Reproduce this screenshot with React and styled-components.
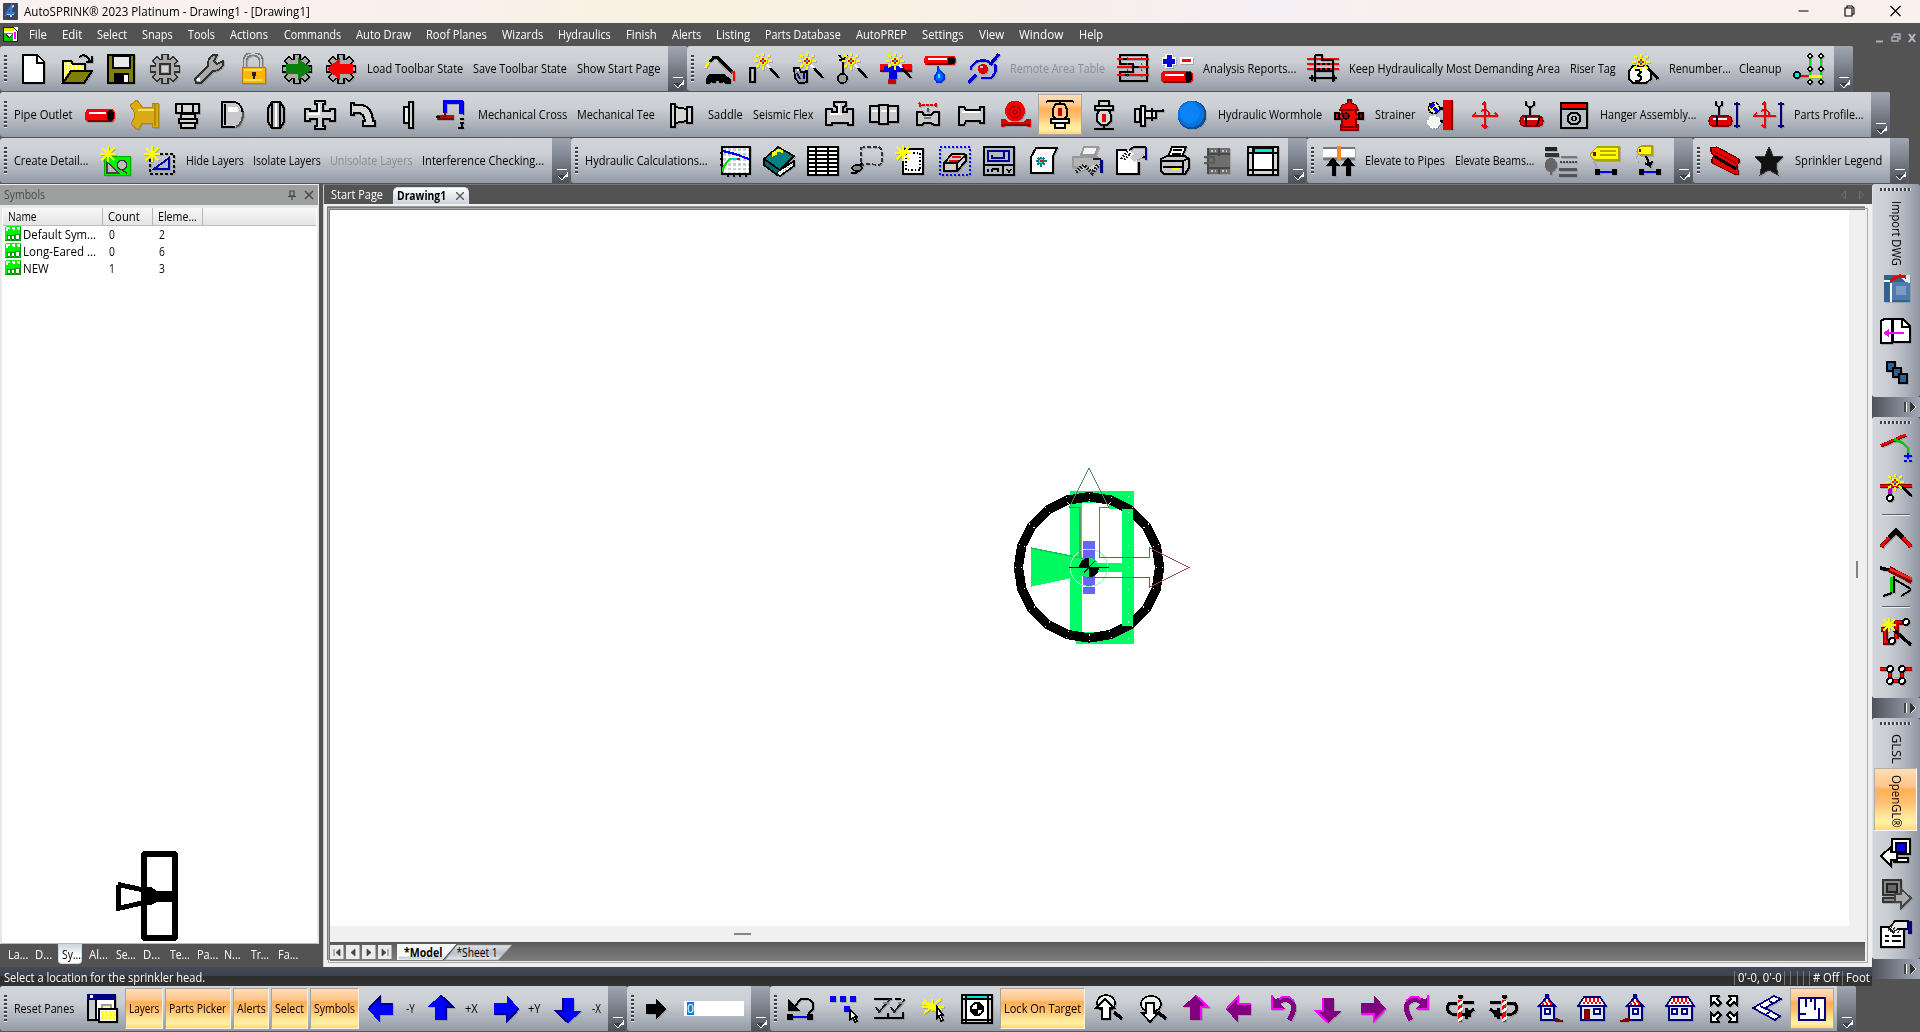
import React, { useLayoutEffect, useRef, useState } from "react";
import styled, { createGlobalStyle, css } from "styled-components";

const Global = createGlobalStyle`
  * { box-sizing: border-box; }
  html, body { margin: 0; padding: 0; overflow: hidden; background: #535353; }
  body { font-family: "Open Sans", "Noto Sans", sans-serif; font-size: 12px; color: #000; }
`;

/* ---------- text that keeps a fixed advance width ---------- */
const FitBox = styled.span`
  display: block;
  flex: none;
  width: ${(p) => p.$w}px;
  height: 16px;
  line-height: 16px;
  white-space: nowrap;
`;
const FitInner = styled.span`
  display: inline-block;
  transform-origin: 0 50%;
`;
function Fit({ w, children }) {
  const ref = useRef(null);
  const [k, setK] = useState(1);
  useLayoutEffect(() => {
    const n = ref.current.offsetWidth;
    if (n) setK(w / n);
  }, [w, children]);
  return (
    <FitBox $w={w}>
      <FitInner ref={ref} style={{ transform: `scaleX(${k})` }}>{children}</FitInner>
    </FitBox>
  );
}

/* ---------- path helpers: a shape is [d, fill, stroke, width, dash] ---------- */
const N = "none", K = "#000", W = "#fff", RD = "#f00", BL = "#0000ff", NV = "#000080", YL = "#ff0", GR = "#9b9b9b", LG = "#d6d6d6", MA = "#ff00ff", PU = "#800080", DR = "#800000";
const R = (x, y, w, h) => `M${x} ${y}h${w}v${h}h${-w}z`;
const C = (x, y, r, s = r) => `M${x - r} ${y}a${r} ${s} 0 1 0 ${2 * r} 0a${r} ${s} 0 1 0 ${-2 * r} 0z`;
const burst = (x, y) => [
  [`M${x - 9} ${y}h4M${x + 5} ${y}h4M${x} ${y - 8}v3M${x} ${y + 5}v4M${x - 7} ${y - 6}l3 2M${x + 4} ${y + 4}l3 3M${x - 7} ${y + 6}l3-2M${x + 4} ${y - 4}l3-2`, N, YL, 2],
  [C(x, y, 3.8), YL, N, 0],
  [`M${x - 3} ${y}h2M${x + 1} ${y}h2M${x} ${y - 3}v2M${x} ${y + 1}v2`, N, RD, 2], [R(x - 1, y - 1, 2, 2), "#00dcdc", N, 0],
];
const star = (x, y, r = 8) => [[`M${x - r} ${y}h${2 * r}M${x} ${y - r}v${2 * r}M${x - r * 0.8} ${y - r * 0.8}l${r * 1.6} ${r * 1.6}M${x - r * 0.8} ${y + r * 0.8}l${r * 1.6} ${-r * 1.6}`, N, YL, 1.8]];
const wand = (x, y) => [...burst(x, y), [`M${x + 4} ${y + 4}l4 4`, N, W, 2], [`M${x + 7} ${y + 7}l9 10`, N, K, 2.6]];
const gearPath = () => {
  let d = "";
  for (let i = 0; i < 8; i++) {
    [[-0.3, 10.5], [-0.2, 14.8], [0.2, 14.8], [0.3, 10.5]].forEach(([o, r], j) => {
      const a = (i * Math.PI) / 4 + o;
      d += `${i + j ? "L" : "M"}${(16 + r * Math.cos(a)).toFixed(1)} ${(16 + r * Math.sin(a)).toFixed(1)}`;
    });
  }
  return d + "z";
};
const gear = (f, s) => [[gearPath(), f, s, 1.5]];
const pipe = (x, y, w, h = 9) => [
  [`M${x + 3} ${y}h${w - 6}q3 0 3 ${h / 2}t-3 ${h / 2}h${-(w - 6)}q-3 0-3 ${-h / 2}t3 ${-h / 2}z`, RD, N, 0],
  [`M${x + 3} ${y + h - 1}h${w - 7}`, N, DR, 2],
  [`M${x + 4} ${y + h * 0.32}h${w - 13}`, N, W, 1.5], [C(x + w - 4.5, y + h / 2, 3.8, h / 2 - 0.5), K, N, 0],
];
const house = (wide, side) => {
  const a = wide ? 4 : 8, w = wide ? 24 : 14;
  return [
    [wide ? `M3 12L8 4h16l5 8z` : `M8 12L14 6h2l6 6z`, W, N, 0],
    [wide ? "M9 6h15M7 10h20" : "M12 8h7M10 11h10", N, RD, 2, "2 2"], [wide ? "M9 8h16" : "M13 9.500h7", N, RD, 1.6, "2 2"],
    [wide ? `M2 13L8 4h16l6 9z` : `M7 13L14 5V2h2v3l7 8z`, N, NV, 1.8],
    [R(a + 1, 13, w - 1, 14), "#dfe6f0", NV, 2],
    ...(wide && side ? [[R(8, 16, 6, 11), DR, N, 0], [R(18, 16, 6, 5), W, NV, 2]] : wide ? [[R(8, 16, 5, 5), W, NV, 2], [R(18, 16, 5, 5), W, NV, 2]] : [[R(13, 16, 5, 5), W, NV, 2]]),
    ...(!wide ? [[side ? "M23 25l8 3h-8z" : "M8 25l-8 3h8z", DR, DR, 1]] : []),
  ];
};
const bigArrow = (rot, f, hi) => [["M2 16L14 4v7h13v11H14v8z", f, N, 0, null, rot], ["M2.500 16L14 4v7h13", N, hi, 2, null, rot]];
const turnArrow = (flip) => [
  ["M11 9Q17 4 23 9T21 27", N, PU, 5, null, 0, flip], ["M3 2v14h14l-5-5 3-3-4-3-4 1z", PU, N, 0, null, 0, flip],
  ["M4 2v14h11M11 7l3-3h7l5 4", N, MA, 2, null, 0, flip],
];

const ICON = {
  file: [["M6 2h14l7 7v21H6z", W, K, 2.2], ["M20 2v8h7", W, K, 2.2]],
  open: [["M2 30V8h8l2 3h12v6", "#ffffb0", K, 2.2], ["M4 10h6M4 13h18M4 16h16M4 19h7M4 22h4", N, YL, 2, "2 2"], ["M2 30L10 18h21l-8 12z", "#808000", K, 2.2], ["M18 4q6-5 11 4M31 3v6h-6", N, K, 2]],
  save: [[R(3, 2, 26, 28), "#808000", K, 2.4], [R(8, 3, 17, 12), "#e8e8e8", K, 1.4], [R(9, 20, 15, 10), K, N, 0], [R(19, 22, 4, 7), W, N, 0]],
  gear: [...gear("#aaa", "#303030"), [R(11, 11, 10, 10), "#aaa", "#303030", 1.5], [R(13, 13, 6, 6), "#cfd2d7", N, 0]],
  wrench: [["M2 26l13-13q-1-7 5-11h4l-3 6 3 3 6-3v4q-3 6-10 6L8 30H3z", "#aaa", "#303030", 1.8], [R(4, 25, 3, 3), W, N, 0]],
  lock: [["M8 14V8q0-7 8-7t8 7v6", N, "#777", 4.5], ["M8 14V8q0-7 8-7t8 7v6", N, "#ccc", 1.6], [R(5, 14, 23, 16), "#ffb600", "#b87900", 1], ["M7 17h18M7 27h18", N, "#ffdc60", 2], ["M15 19h4v4h-1v3h-2v-3h-1z", "#222", N, 0]],
  loadGear: [...gear("#aaa", K), ["M5 11h12V5l14 11-14 11v-6H5z", "#0a820a", N, 0]],
  saveGear: [...gear("#aaa", K), ["M28 11H15V5L2 16l13 11v-6h13z", RD, N, 0]],

  lasso: [["M2 30V26L6 21H19L26 26V30H21L18 27H9L6 30Z", K, K, 1], ["M8 29h4M15 29h4", N, K, 2], ["M6 9L10 4H13L29 20", N, K, 3], ["M14 9L22 16", N, GR, 1.6], ["M1 15L5 9", N, YL, 2.4], ["M27 19h3v9", N, RD, 2.6]],
  wand1: [...wand(15, 8), [R(2, 15, 5, 14), GR, K, 2], ["M4.500 16v12", N, LG, 1.5]],
  wand2: [["M2 15h5l2 4h4l2-3v13l-4 1H7l-4-5z", GR, K, 1.8], ["M5 20l3 6M12 20v6", N, NV, 1.5], ["M5 17h2", N, W, 2], ...wand(15, 8)],
  wand3: [["M3 2l4 5 4-5M7 8v12", N, K, 2], ["M3 7h4", N, K, 1.5], [C(6.5, 25.5, 4.5), GR, K, 1.8], ...wand(15, 8)],
  wand4: [[R(0, 11, 8, 8), RD, N, 0], [R(22, 11, 10, 8), RD, N, 0], ["M0 18h6M24 18h8", N, DR, 2], ["M4 13h20v6h-7v7H9v-7H4z", "#0000e8", N, 0], [R(8, 26, 8, 5), "#d00000", N, 0], ...wand(15, 8)],
  drip: [...pipe(0, 3, 32, 9), ["M14 13v5l-3 5v3l2 3h4l3-3v-4l-3-4", "#0060ff", "#0030e0", 1.6], ["M15 21v4", N, "#0ff", 2]],
  swirl: [["M0 30L8 22M22 12L31 1", N, "#0000c8", 3.4], ["M3 17V14L8 9Q14 6 22 9M27 11q3 8-4 14H13", N, "#0000d8", 2.6], [C(15, 16, 5.2), "#d80000", N, 0], [C(13.5, 14, 1.4), "#fbb", N, 0]],
  area: [["M3 2h27v26H3v-9h13v-8H3z", N, K, 2.2], ["M0 6h6M10 6h22M0 14h15M22 14h10M0 22h8M12 22h20", N, RD, 1.8], ["M6 6h4M15 14h7M8 22h4", N, K, 1.6], ["M10 4v24M24 4v24", N, "#555", 1, "2 4"]],
  plusMinus: [[R(20, 5, 11, 5), RD, W, 1.6], ["M8 1v14M1 8h14", N, W, 8], ["M8 2v12M2 8h12", N, "#0000e0", 5], ...pipe(0, 18, 32, 12)],
  chair: [["M0 6h32M0 11h32M0 16h32", N, RD, 1.8], ["M8 2h7v5h11v22M8 2v27M8 18h18M2 25h28M5 22v6M27 22v6", N, K, 2], ["M10 11h14M10 16h14", N, K, 1.2, "3 2"]],
  three: [["M2 18l4-5h14l4 5v8l-5 4H6l-4-4z", W, K, 2], ["M20 14l11 12", N, K, 3], ["M8 17h4l2 2-3 3 3 2v2l-2 2H8", N, K, 2], ...burst(14, 9)],
  cleanup: [["M17 4v24M28 4v24", N, "#00e000", 2.4], ["M4 23h12", N, RD, 2.4], ["M16 23h13", N, YL, 3], [C(4, 22, 3), "#00e5e5", K, 1.6], ...[[17, 3], [28, 3], [17, 16], [28, 16], [17, 29], [28, 29]].map(([x, y]) => [C(x, y, 2), W, K, 1.4])],

  pipe: pipe(1, 10, 30, 13),
  wye: [["M2 6l7-5 5 7h10V4h6v24h-6v-4H14l-4 7-7-6 3-6v-6z", "#d9aa14", "#b38800", 1], ["M10 11h18", N, "#f6e060", 2], ["M27 5v22", N, "#b88a00", 2.5]],
  nut: [[R(4, 5, 23, 9), LG, K, 2], ["M10 5v9M21 5v9", N, K, 2], [R(9, 15, 14, 5), LG, K, 2], [R(7, 20, 18, 4), LG, K, 2], [R(9, 24, 14, 5), LG, K, 2]],
  capD: [["M6 3h13q8 0 8 12t-7 13H6z", "#c9c9cb", N, 0], ["M19 28H6V3h13q7 2 8 12", N, K, 2], ["M27 13q0 12-7 15", N, "#555", 2], ["M9 5v21", N, K, 1.6], ["M12 8h10v5H12z", W, N, 0]],
  disc: [["M12 3h8l4 6v14l-4 6h-8l-4-6V9z", "#b4b4b6", K, 2], ["M12 3v26M20 3v26", N, K, 1.6], ["M16 4v24", N, W, 2.4]],
  cross: [["M11 2h10v3h-2v7h7v-2h5v12h-5v-2h-7v7h2v3H11v-3h2v-7H6v2H1V10h5v2h7V5h-2z", "#d0d0d4", K, 2], ["M15 5v10H4", N, W, 2]],
  elbow: [["M3 4h3v2h8q10 2 11 16h2v5H15v-5h2q-1-8-7-8H6v2H3z", LG, K, 2]],
  plate: [[R(17, 3, 4, 26), LG, K, 2], [R(12, 8, 5, 16), "#eee", K, 2]],
  ubend: [["M9 14V3h16v12", N, BL, 3.6], ["M7 14V2h20v14", N, NV, 1], ["M1 18h17", N, "#d00000", 5], ["M0 18h4", N, K, 2], ["M2 20h16M9 13v5", N, DR, 2], ["M24 20h4M24 24h4M26 24v5M22 29h6", N, K, 2]],
  reducer: [[R(5, 5, 4, 23), LG, K, 2], ["M9 8l12 2v12l-12 2z", LG, K, 2], [R(21, 8, 5, 16), LG, K, 2]],
  tee: [["M2 10h6v3h5V8l-3-1V3h12v4l-3 1v5h4v-3h6v16h-5v-2H8v2H2z", "#cacacc", K, 2], ["M6 15h12M15 5v10", N, W, 2]],
  coupling: [[R(2, 7, 9, 16), "#cacacc", K, 2], [R(20, 7, 10, 16), "#cacacc", K, 2], [R(11, 6, 9, 19), "#cacacc", K, 2], ["M4 12h6M13 12h6M22 12h6", N, W, 2]],
  valve: [["M7 4l2 2M7 8l2-2h14l2-2M23 6l2 2", N, "#e00000", 1.8, "3 1"], ["M15.500 9v4", N, "#555", 2], ["M5 13h5l2 3h7l3-3h5v13h-5l-3-2h-7l-2 2H5z", "#cacacc", K, 2], ["M12 19h7", N, "#777", 1.6]],
  spool: [["M3 8h5l2 3h14V8h4v16h-4v-2H10l-2 4H3z", "#cacacc", K, 2], ["M6 13h18", N, W, 2]],
  pump: [[C(15, 12, 10, 10.5), "#f20000", N, 0], [C(15, 13, 5.5), N, "#a80000", 1.4], [C(15, 13, 2), N, "#a80000", 1.2], ["M1 28V20h4l3 3h15l3-3h5v8h-3l-3-2H7l-3 2z", "#d40000", N, 0], ["M2 26h28", N, "#900000", 1.6]],
  head: [["M2 3l2-1h24l2 1M16 2v4", N, K, 2], ["M12 5q-3 3-3 7v5l3 3h8l3-3v-5q0-4-3-7z", "#ffc98c", K, 2], [R(14, 9, 4, 8), "#c00", N, 0], [R(7, 20, 18, 4), "#f4f4f4", K, 2], [R(11, 24, 10, 5), "#f4f4f4", K, 2]],
  headUp: [[R(11, 2, 10, 5), LG, K, 2], [R(7, 7, 18, 4), LG, K, 2], ["M12 11q-3 2-3 7v4l4 4h6l4-4v-4q0-5-3-7z", "#d8d8d8", K, 2], [R(14, 15, 4, 8), "#e00", N, 0], ["M16 26v3M6 30h20", N, K, 2]],
  sidewall: [[R(3, 10, 5, 13), LG, K, 2], [R(9, 7, 4, 20), "#eee", K, 2], ["M13 12h11v7H13z", "#e4e4e4", K, 2], ["M20 9v13", N, K, 1.4], ["M24 12h8M30 11h2", N, K, 2]],
  sphere: [[C(16, 16, 14.5), "#0a4f9c", N, 0], [C(15, 15, 13.2), "#0873dc", N, 0], [C(14, 14, 10), "#0a84f4", N, 0]],
  hydrant: [["M15 1h3v3l5 2 2 5H7l2-5 6-2z", RD, "#700", 1.2], ["M9 11h14v4h4v5h-4v6h2v5H8v-5h1v-6H5v-5h4z", RD, "#700", 1.2], [C(13, 17, 3), "#900", K, 1.2], [R(2, 14, 4, 6), RD, K, 1.4], [R(26, 14, 4, 6), "#800", K, 1.4], ["M6 11h20M7 28h19", N, "#700", 1.5]],
  strainerA: [[R(17, 1, 8, 30), "#e00000", N, 0], [R(25, 1, 2, 30), DR, N, 0], [C(8, 9, 5.5), "#fff27a", K, 1.8, "3 1"], ["M4 9l4-4M8 9l4 4", N, BL, 3], ["M13 9h4M13 22h4", N, K, 3], [C(8, 23, 6), "#f4f4f4", W, 1.5, "3 2"]],
  axes: [["M2 17h26M15 3v26M12 6l3-3M12 26l3 3 2-2M6 14l-4 3M25 14l3 3", N, "#f40000", 1.6], ["M11 12l4-2 4 3v5", N, "#f40000", 1.4]],
  hanger: [["M12 2v4l3 2h2l3-2V2M16 8v9", N, K, 1.8], ["M9 17h16q4 0 4 5t-4 5H9q-3 0-3-5t3-5z", "#e00000", DR, 1.2], ["M10 20h14", N, W, 1.8], ["M12 17v10", N, K, 1.8], ["M26 18l-3 8", N, K, 1.8]],
  vault: [[R(3, 4, 26, 25), "#b9bdc4", K, 2.2], [R(3, 4, 26, 6), RD, K, 1.5], ["M3 10h26", N, K, 2], ["M13 14h6l3 3v5l-3 3h-6l-3-3v-5z", N, K, 1.8], [C(16, 19.5, 2), N, K, 1.6]],
  hangerDim: [["M8 2v4l3 2 3-2V2M11 8v9", N, K, 1.8], ["M4 17h16q4 0 4 5t-4 5H4q-3 0-3-5t3-5z", "#e00000", DR, 1.2], ["M5 20h14", N, W, 1.8], ["M9 17v10", N, K, 1.8], ["M29 3v26M26 5h6M26 27h6", N, NV, 2]],
  axesDim: [["M1 17h23M13 3v26M10 6l3-3M10 26l3 3M5 14l-4 3", N, "#f40000", 1.6], ["M9 12l4-2 4 3v5", N, "#f40000", 1.4], ["M29 3v26M26 5h6M26 27h6", N, NV, 2]],

  detail: [[R(4, 11, 26, 19), "#00f000", "#00b000", 1], ["M7 28V17l12 11z", "#b9bec5", "#444", 1.3], [C(22, 20, 4.5), "#b9bec5", "#333", 1.5], ["M22 25l5 3", N, "#333", 1.5], ...star(8, 9)],
  crop: [[R(6, 9, 24, 20), N, K, 2, "3 2"], ["M10 24L25 13v11z", "#b7bbc6", "#0000a8", 2], ...star(8, 9)],
  graph: [[R(3, 2, 28, 27), "#c8cbd2", K, 2], ["M8 3v25M13 3v25M18 3v25M23 3v25M28 3v25M4 7h26M4 12h26M4 17h26M4 22h26M4 26h26", N, W, 1.4], ["M1 8h2M1 14h2M1 20h2M9 30v2M15 30v2M21 30v2M27 30v2", N, K, 1.6], ["M4 6l12 3 14 5", N, BL, 2.2], ["M4 27v-4l4-6 3-3h3", N, "#00e000", 2], ["M12 14h6", N, "#00d8d8", 2.4], ["M18 14h3", N, RD, 2.4]],
  book: [["M1 14L15 2l16 9-14 14z", "#008080", K, 1.8], ["M1 14v6l13 10 3-5z", "#006868", K, 1.8], ["M17 25l14-9v5L17 31l-3-2", W, K, 1.8], ["M17 28l13-9", N, GR, 1, "1.5 1.5"], ["M9 9l7-4 4 2M9 11l5-3", N, YL, 2.4]],
  table: [[R(1, 2, 30, 28), "#fff", K, 2], ["M1 6h30M1 10h30M1 14h30M1 18h30M1 22h30M1 26h30M9 2v28M21 2v28", N, K, 1.8]],
  region: [["M10 3l3-1h15l3 3v13l-3 2-10-1-8 1z", N, "#333", 1.8, "4 2"], ["M0 28h5l4-3M8 21l3-3", N, K, 2], [C(6, 23, 5, 3), "#888", K, 1.6]],
  newPage: [[R(8, 4, 20, 25), "#fff", K, 2.2], [R(11, 8, 14, 17), N, K, 1.5, "1.5 2"], ...star(8, 8)],
  cubeSel: [[R(1, 2, 30, 28), N, BL, 2, "2 2"], ["M5 18l8-9h11l3 1v6l-9 10H5z", "#ccc", K, 2], ["M5 18h13l9-8M18 18v8", N, K, 1.8], ["M13 12h9M10 16h9", N, RD, 2.2]],
  panel: [[R(1, 2, 30, 28), "#b7bbc2", K, 2.2], ["M5 6h21v10H5zM9 10v3h12V6", N, "#000090", 2], ["M1 20h30M20 20v10", N, K, 2], ["M5 24v3M9 24v3M9 24h6v3M24 24l2 3 2-3", N, K, 1.8]],
  scroll: [["M4 28V12l5-9h21l-4 8v17z", "#fff", K, 2], ["M9 16h11M14 12v10M11 13l7 7M17 13l-7 7", N, "#008080", 1.8], [C(14, 16, 2), "#0ff", N, 0], ["M13 16h3", N, RD, 1.5]],
  printPic: [["M10 10l3-8h14l-3 8z", "#f2f2f2", "#999", 2], ["M2 12h24l4 3v7H2z", "#b4b4b4", "#999", 1.5], ["M5 28l8-8 3 3 8 4 4-9", "#ccc", N, 0], ["M5 27l8-7 8 8 7-9", N, "#222", 4, "1.5 1.5"], ["M22 14h8", N, "#222", 2], ["M30 15v13", N, NV, 3]],
  pageBrush: [["M2 5h12l8 6v17H2z", "#fff", N, 0], ["M12 5H2v24h22V17", N, K, 2], ["M14 5l5-3h12M26 12h5", N, K, 2], ["M6 14l6-7 7 6M9 15l6-6", N, "#222", 2.6, "1.5 1.5"], ["M15 12l5-4h8v4l-6 2-3 3z", "#c8c8c8", N, 0], ["M31 2v13", N, NV, 3]],
  printer: [["M9 12l4-10h14l-4 10z", "#fff", K, 2], ["M14 5h9M13 9h9", N, K, 1.4], ["M2 14l6-3h18l4 3v9l-4 6H5l-3-3z", "#c6c6c6", K, 2], ["M2 16h22l6-3M4 22h20M24 17v11", N, K, 1.6], ["M13 24h8", N, YL, 2.4]],
  server: [[R(5, 3, 22, 26), "#6e6e6e", N, 0], ["M5 3v26M16 3v8M16 22v7", N, "#484848", 1.8], ["M8 6h5M8 26h5M19 6h5M19 26h5", N, "#c8c8c8", 1.6, "2 2"], ["M5 9h22M5 23h22", N, "#484848", 1.4], ["M1 12h10v6H1", N, "#5a5a5a", 2.5]],
  windowI: [[R(1, 2, 30, 28), "#d4d6da", K, 2.2], [R(6, 8, 20, 17), W, N, 0], [R(7, 3, 18, 5), "#00e5e5", K, 1], ["M1 8h30M6 2v28M26 2v28M1 25h30", N, K, 1.8]],
  windowT: [[R(1, 2, 30, 28), "#d4d6da", K, 2.2], [R(5, 7, 22, 20), W, N, 0], [R(6, 3, 20, 2.5), "#00e5e5", N, 0], ["M1 6h30M5 2v28M27 2v28M1 27h30", N, K, 1.5], [C(16, 16, 6), W, K, 2], ["M16 10v6h6a6 6 0 0 0-6-6M16 22v-6h-6a6 6 0 0 0 6 6", K, K, 1]],
  elevPipes: [["M0 3h32M0 14h32", N, "#777", 2.4], [R(0, 4, 32, 8), W, N, 0], ["M16 1v14", N, "#ff8a20", 4], ["M9 31V21H3l7-9 7 9h-4v10zM23 31V21h-5l7-9 7 9h-4v10z", K, N, 0]],
  levels: [[R(0, 2, 12, 4), "#222", N, 0], [R(0, 8, 14, 4), "#333", N, 0], ["M16 12h16", N, "#777", 2], ["M15 17h17", N, "#444", 1.5, "2 1"], [C(6, 20, 6, 7), "#666", N, 0], ["M14 24h18M14 30h18", N, "#555", 3], ["M6 26v4", N, "#666", 2]],
  tagWide: [["M4 6l4-4h22v13H6l-5-5z", YL, "#b0a000", 1.2], ["M11 6h16M11 10h16", N, "#b8a800", 1.5], [R(4, 7, 3, 4), DR, N, 0], ["M3 12l5 12", N, "#aaa", 1.6], ["M10 27h14", N, BL, 2], [R(6, 24, 5, 6), K, N, 0], [R(23, 24, 5, 6), K, N, 0]],
  tagDown: [["M5 3l3-2h11v9H7l-3-3z", YL, "#b0a000", 1.2], [R(6, 4, 2, 3), DR, N, 0], ["M4 8q-4 6 1 8", N, "#ccc", 1.8], ["M13 11l4 10M12 18l5 3 2-5", N, K, 2.2], ["M10 27h14", N, BL, 2], [R(6, 24, 5, 6), K, N, 0], [R(23, 24, 5, 6), K, N, 0]],
  beam: [["M2 3l6-1 22 12v4l-2 2v4l2 2-1 4-4-1L3 18v-4l2-3-3-4z", "#e80000", "#600", 1.2], ["M5 11l22 13", N, K, 3], ["M5 6l22 12", N, "#a00000", 1.5]],
  starI: [["M16 2l4 9 10 1-7 7 2 11-9-5-9 5 2-11-7-7 10-1z", "#111", "#333", 1]],

  panes: [[R(2, 2, 27, 25), W, K, 2], [R(1, 1, 29, 6), NV, N, 0], [R(4, 2, 3, 3), W, N, 0], [R(3, 7, 6, 19), "#c6c9cf", N, 0], ["M10 7v20", N, K, 2], [R(16, 12, 9, 5), "#ffff90", GR, 1.5], [R(13, 16, 18, 13), "#fff", K, 1.8], [R(15, 18, 14, 9), "#ffff70", N, 0], ["M15 19h14M16 22h14M15 25h14", N, YL, 2, "2 2"]],
  left: bigArrow(0, BL, NV), up: bigArrow(90, BL, NV), right: bigArrow(180, BL, NV), down: bigArrow(270, BL, NV),
  pLeft: bigArrow(0, PU, MA), pUp: bigArrow(90, PU, MA), pRight: bigArrow(180, PU, MA), pDown: bigArrow(270, PU, MA),
  black: [["M6 11h10V6l11 10-11 10v-5H6z", K, N, 0]],
  undoDim: [["M9 14L16 6h7q7 3 5 10l-5 5", N, K, 2], ["M3 6v12h12z", K, N, 0], ["M8 24h14", N, BL, 2], [R(2, 21, 6, 6), K, N, 0], [R(22, 21, 6, 6), K, N, 0]],
  dots: [[R(1, 3, 6, 6), BL, N, 0], [R(11, 3, 6, 6), BL, N, 0], [R(21, 3, 6, 6), BL, N, 0], [R(15, 13, 6, 6), BL, N, 0], ["M21 17v10l3-2 2 4 2-1-2-4h2z", W, K, 1.4]],
  checks: [["M1 6h18M22 6h6M1 25h30", N, K, 2], ["M15 20v4M30 19v6", N, K, 2], ["M3 14l3 5L17 6M18 14l3 5L32 6", N, "#222", 1.8], ["M10 10h6M25 10h5", N, "#888", 1.6]],
  sparkSel: [["M5 14h22M15 6v12M7 7l15 13M7 20L24 6M5 10l20 7", N, YL, 2.2], ["M20 14v11l2-2 2 5 2-1-2-5h2z", W, K, 1.5]],
  zoomUp: [[C(14, 10, 9, 8), "#eee", K, 1.8], ["M22 19l8 7", N, K, 3.5], ["M13 6l9 9h-4v11h-8V15H4z", W, K, 1.8]],
  zoomDn: [[C(15, 11, 10, 8), "#eee", K, 1.8], ["M22 19l8 7", N, K, 3.5], ["M14 29l8-9h-4V10h-8v10H6z", W, K, 1.8]],
  turnL: turnArrow(false), turnR: turnArrow(true),
  rotA: [["M16 2v4M14 3h5", N, K, 3], ["M16 7v22", N, RD, 4.5], ["M14 12l5-4M14 19l5-4M14 28l5-4", N, W, 2.4], ["M30 9H19M13 10H6q-4 3-2 8 3 4 9 4", N, K, 3], ["M30 16l-6 5h-6M22 15v11M25 17v7", N, K, 3]],
  rotB: [["M16 2v4M14 3h5", N, K, 3], ["M16 7v22", N, RD, 4.5], ["M14 12l5-4M14 19l5-4M14 28l5-4", N, W, 2.4], ["M2 9h11M19 10h7q4 3 2 8-3 4-9 4", N, K, 3], ["M2 16l6 5h6M10 15v11M7 17v7", N, K, 3]],
  houseA: house(false, true), houseB: house(true, true), houseC: house(false, false), houseD: house(true, false),
  expand: [["M3 3h8l-2 3 4 4-3 3-4-4-3 3zM29 3h-8l2 3-4 4 3 3 4-4 3 3zM3 29h8l-2-3 4-4-3-3-4 4-3-3zM29 29h-8l2-3-4-4 3-3 4 4 3-3z", W, K, 1.6]],
  plan3d: [["M1 15L22 3l7 3-16 9 15 8-5 4z", W, NV, 1.8], ["M8 13l6 3M17 8l4 2M14 21l4-2", N, NV, 1.8]],
  plan: [[R(3, 5, 26, 22), W, NV, 2.4], ["M10 5v9M15 5v4M19 5v12M23 27V15M3 21h7", N, NV, 2]],

  dwg: [[R(4, 2, 26, 27), "#2f6295", N, 0], [R(12, 9, 18, 18), "#4f7cab", N, 0], [R(16, 13, 10, 9), "#7b9cc0", N, 0], ["M20 2h10v8l-5-1z", "#e4e8ee", N, 0], ["M11 10v19M4 8h8", N, W, 2], ["M10 8l5-3 5-2 6 1", N, "#e00000", 3.4]],
  overlay: [["M1 6l3-2h8v24H1z", W, K, 2], ["M13 4h10l7 7v16H13z", W, K, 2], ["M22 3v9h7", N, K, 2], ["M5 18h19M9 15l-4 3 4 3", N, MA, 2]],
  boxes: [[R(7, 4, 8, 9), "#2f5f90", K, 2], [R(13, 10, 8, 9), "#2f5f90", K, 2], [R(19, 16, 8, 9), "#2f5f90", K, 2]],
  sprigA: [["M1 14L26 3", N, DR, 3.6], ["M1 13.500L26 2.500", N, RD, 2], ["M14 7l9 4 5 5v6", N, "#00c800", 2.6], ["M28 21v6M24 24h8M24 29h3M29 29h3", N, BL, 2]],
  sprigB: [["M0 12h32", N, DR, 4], ["M0 11.500h32", N, RD, 2], ["M10 13v9", N, "#c000c0", 3.6], ["M22 13l10 9", N, K, 2.6], [C(10, 24, 3), W, K, 2], ...burst(15, 8)],
  bend: [["M1 23l8-9M31 23l-8-9", N, DR, 4.5], ["M1 22.500l8-9M31 22.500l-8-9", N, RD, 2.6], ["M9 14l7-7 7 7", N, K, 4.5]],
  route: [["M0 3l14 3", N, K, 3.6], ["M9 4l23 12", N, DR, 6], ["M10 4l22 10", N, "#f22", 2.6], ["M11 12v16", N, "#00d800", 3], ["M14 11v17M3 31l9-3M14 14l17 10M21 31l10-6", N, K, 2]],
  joinA: [["M1 12h4v13h5M16 22V5h8", N, DR, 5], ["M1 12h4v13h5M16 22V5h8", N, RD, 2.5], ["M14 13l17 15", N, K, 3.4], ...star(9, 8, 7), [C(26, 5, 3), W, K, 2], [C(12, 24, 3), W, K, 2]],
  joinB: [["M0 6h32M10 6v12h12V6", N, DR, 4.6], ["M0 6h10v12h12V6h10", N, RD, 2.6], [R(13, 2, 6, 12), "#bfc3c9", N, 0], ...[[10, 6], [22, 6], [10, 18], [22, 18]].map(([x, y]) => [C(x, y, 3), W, K, 2])],
  monL: [[R(12, 2, 18, 15), W, K, 2.2], [R(16, 6, 10, 9), BL, K, 1.5], ["M14 21h14v4H14z", W, K, 1.5], ["M1 19l10-9v5h6v8h-6v6z", W, K, 2]],
  monR: [[R(3, 2, 18, 15), "#888", "#333", 2.2], [R(7, 6, 10, 8), "#666", "#222", 1.5], ["M3 20h12v4H3z", "#888", "#333", 1.5], ["M31 20l-10-9v5h-6v8h6v6z", "#aaa", "#444", 1.8]],
  props: [[R(1, 8, 23, 20), W, K, 2], ["M5 17h4M12 17h9M5 22h4M12 22h9", N, K, 1.8], ["M9 9l6-7h13v8H18l-5 3z", "#e8e8e8", K, 1.6], ["M8 10l7 4M11 7l8 6", N, "#333", 3, "1.5 1.5"], ["M30 2v13", N, NV, 4]],
};

const IconSvg = styled.svg`
  display: block;
  flex: none;
  width: 32px;
  height: 32px;
  filter: ${(p) => (p.$flat ? "none" : "drop-shadow(1.5px 1.5px 0 rgba(130,132,136,.5))")};
`;
function Icon({ name, flat }) {
  return (
    <IconSvg viewBox="0 0 32 32" shapeRendering="crispEdges" $flat={flat}>
      {ICON[name].map(([d, f, s, w, dash, rot, flip], i) => (
        <path key={i} d={d} fill={f} stroke={s} strokeWidth={w} strokeDasharray={dash || undefined}
          transform={rot ? `rotate(${rot} 16 16)` : flip ? "matrix(-1 0 0 1 32 0)" : undefined} />
      ))}
    </IconSvg>
  );
}

/* ---------- window chrome ---------- */
const Shell = styled.div`
  width: 1920px;
  height: 1032px;
  display: flex;
  flex-direction: column;
  background: #535353;
  overflow: hidden;
`;
const TitleBar = styled.header`
  height: 23px;
  flex: none;
  display: flex;
  align-items: center;
  padding: 0 19px 0 3px;
  background: linear-gradient(90deg, #f9f0f0 0, #f9f0ee 420px, #f9f2e0 660px, #f9f1e2 860px, #f7edeb 1080px, #f5f0f4 1270px, #f9efee 1420px, #faf0ee);
`;
const AppLogo = styled.svg`
  width: 15px; height: 17px; margin-right: 6px; flex: none;
`;
const Spacer = styled.div` flex: 1; `;
const WinButtons = styled.div`
  display: flex;
  gap: 35px;
  svg { width: 11px; height: 13px; display: block; margin-top: -3px; }
`;
const MenuBar = styled.nav`
  height: 23px;
  flex: none;
  display: flex;
  align-items: center;
  gap: 15.08px;
  padding: 0 3px 0 3px;
  color: #fff;
  background: #535353;
`;
const MenuIcon = styled.svg` width: 15px; height: 15px; margin-right: -4px; `;
const MdiButtons = styled.div`
  display: flex;
  align-items: center;
  gap: 6px;
  margin-top: 7px;
  svg { width: 10px; height: 10px; display: block; }
`;

/* ---------- toolbars ---------- */
const barBg = "linear-gradient(180deg, #d2d5da 0, #cbced3 36%, #b3b8c0 64%, #949ba6 100%)";
const sideBg = "linear-gradient(90deg, #d2d5da 0, #cbced3 30%, #b3b8c0 64%, #8f96a2 100%)";
const orange = "linear-gradient(180deg, #ffddb8 0, #ffc68a 28%, #ffb056 34%, #ffc070 55%, #ffe89a 78%, #fff0a4 88%, #ffd870 100%)";
const ToolRow = styled.div`
  height: 46px;
  flex: none;
  display: flex;
  background: #53575c;
  width: ${(p) => p.$w}px;
`;
const Bar = styled.section`
  width: ${(p) => p.$w}px;
  height: 45px;
  flex: none;
  display: flex;
  border-radius: 3px;
  background: ${barBg};
  overflow: hidden;
`;
const Grip = styled.div`
  width: 3px;
  height: 27px;
  flex: none;
  margin: 9px ${(p) => p.$gap - 7}px 0 4px;
  background: repeating-linear-gradient(180deg, #3b3e44 0 2px, #e4e6ea 2px 3px, transparent 3px 4px);
`;
const Items = styled.div` display: flex; flex: 1; min-width: 0; `;
const Slot = styled.div`
  width: 44px;
  height: ${(p) => (p.$on ? 41 : 45)}px;
  margin-top: ${(p) => (p.$on ? 2 : 0)}px;
  padding-top: ${(p) => (p.$on ? 0 : 1)}px;
  flex: none;
  display: flex;
  align-items: center;
  justify-content: center;
  ${(p) => p.$on && css`background: ${orange}; border: 1px solid #f8efe0; outline: 1px solid #aaa89f; outline-offset: -1px; `}
`;
const TextSlot = styled.div`
  flex: none;
  display: flex;
  align-items: center;
  padding: 1px ${(p) => p.$pr ?? 5.6}px 0 ${(p) => (p.$w < 14 ? 1.5 : 4)}px;
  color: ${(p) => (p.$off ? "#8a8d92" : "#000")};
`;
const Toggle = styled.div`
  flex: none;
  height: 41px;
  margin: 2px 1px 0;
  padding: 1px 3px 0;
  display: flex;
  align-items: center;
  background: ${orange};
  border: 1px solid #a9a49a;
  border-right-color: #f8f0e0;
  border-bottom-color: #f8f0e0;
`;
const Chevron = styled.div`
  width: 19px;
  height: 45px;
  flex: none;
  display: flex;
  align-items: flex-end;
  justify-content: center;
  padding-bottom: 2px;
  background: linear-gradient(180deg, #a0a6b1 0, #868c97 35%, #4d525c 100%);
  svg { width: 12px; height: 13px; display: block; }
`;
function More() {
  return (
    <Chevron>
      <svg viewBox="0 0 12 13" shapeRendering="crispEdges">
        <path d="M1 1.500h10" stroke="#fff" strokeWidth="1" />
        <path d="M1 6.500h9l-4.500 5z" fill="#3b3f46" />
        <path d="M2 8l4 4 1-1 4-5v3" stroke="#fff" strokeWidth="1.200" fill="none" />
      </svg>
    </Chevron>
  );
}
const NumberInput = styled.div`
  width: 60px;
  height: 15px;
  margin: 15px 0 0 6px;
  background: #fff;
  padding: 1px 3px;
  line-height: 13px;
  color: #fff;
  span { background: #0a78d7; display: block; width: 7px; height: 13px; }
`;

/* item: "icon", "*icon" (pressed), [text, width, flag] */
function Tools({ w, gap = 10, items }) {
  return (
    <Bar $w={w}>
      <Grip $gap={gap} />
      <Items>
        {items.map((it, i) => {
          if (typeof it === "string") {
            const on = it[0] === "*";
            return <Slot key={i} $on={on}><Icon name={on ? it.slice(1) : it} flat={on} /></Slot>;
          }
          if (!Array.isArray(it)) return React.cloneElement(it, { key: i });
          const [t, tw, flag] = it;
          if (flag === "on") return <Toggle key={i}><Fit w={tw}>{t}</Fit></Toggle>;
          return <TextSlot key={i} $w={tw} $off={flag === "off"} $pr={typeof flag === "number" ? flag : undefined}><Fit w={tw}>{t}</Fit></TextSlot>;
        })}
      </Items>
      <More />
    </Bar>
  );
}

/* ---------- work area ---------- */
const Work = styled.div` height: 848px; flex: none; display: flex; `;
const LeftStack = styled.div` width: 1872px; display: flex; flex-direction: column; flex: none; `;
const Panes = styled.div` height: 783px; flex: none; display: flex; `;
const SymbolPane = styled.aside`
  width: 319px; flex: none; display: flex; flex-direction: column; border-top: 1px solid #eee;
`;
const PaneTitle = styled.div`
  height: 20px; flex: none; display: flex; align-items: center; gap: 7px; padding: 0 4px 1px 4px; color: #4a4a4a;
  background: #9da09e; border-right: 1px solid #eee;
  svg { width: 10px; height: 10px; }
`;
const PaneBody = styled.div`
  height: 739px; flex: none; background: #fff; border: 2px solid #e8e8e8; border-top-width: 3px; border-bottom: 1px solid #bbb;
  display: flex; flex-direction: column;
`;
const HeadRow = styled.div`
  height: 18px; flex: none; display: flex; background: linear-gradient(#f7f7f7, #e4e4e4); border-bottom: 1px solid #bbb; margin: 0 1px;
`;
const HeadCell = styled.div`
  width: ${(p) => p.$w}px; padding: 1px 0 0 5px; border-right: 1px solid #b5b5b5; flex: none;
`;
const SymRow = styled.div`
  height: 17px; flex: none; display: grid; grid-template-columns: 16px 84px 48px 1fr; align-items: center; padding-left: 3px; column-gap: 2px;
  svg { width: 16px; height: 15px; display: block; margin-top: -3px; }
`;
const Preview = styled.svg` width: 70px; height: 96px; display: block; margin: auto 0 0 112px; `;
const PaneTabs = styled.div` flex: 1; display: flex; padding-left: 8px; color: #fff; `;
const PaneTab = styled.div`
  width: ${(p) => p.$w}px; flex: none; padding-top: 3px; height: 20px;
  ${(p) => p.$on && css`background: linear-gradient(#cdd3da, #fff 60%); color: #000; border-radius: 0 0 4px 4px; border: 1px solid #bfe0e6; border-top: 0; padding-left: 3px; margin: 0 7px 0 -4px;`}
`;
const Mdi = styled.main` flex: 1; margin-left: 4px; display: flex; flex-direction: column; border-left: 1px solid #ccc; border-top: 1px solid #777; `;
const DocTabs = styled.div` height: 19px; flex: none; display: flex; align-items: center; padding: 0 7px; color: #fff; `;
const DocTab = styled.div`
  width: 76px; height: 17px; margin: 2px 0 0 10px; padding: 0 4px 0 3px; display: flex; align-items: center; justify-content: space-between;
  color: #000; font-weight: 700; background: linear-gradient(#fff, #ccd1d8); border: 1px solid #cfe6ec; border-bottom: 0; border-radius: 5px 5px 0 0;
  svg { width: 8px; height: 8px; }
`;
const TabArrows = styled.svg` width: 24px; height: 10px; `;
const DocFrame = styled.div`
  flex: 1; min-height: 0; display: flex; flex-direction: column; background: #777; border: solid #efefef; border-width: 2px 7px 7px 3px;
  box-shadow: inset 0 1px 0 #999; padding: 4px 0 0 3px; outline: 1px solid #aaa; outline-offset: -5px;
`;
const CanvasRow = styled.div` height: 716px; flex: none; display: flex; `;
const Canvas = styled.div` flex: 1; background: #fff; position: relative; `;
/* the head symbol sits at its model position on the free canvas */
const Head = styled.svg` position: absolute; left: 670px; top: 240px; width: 200px; height: 210px; `;
const VScroll = styled.div`
  width: 16px; background: #f0f0f0; padding: 351px 0 0 7px;
  &::after { content: ""; display: block; width: 2px; height: 17px; background: #858585; }
`;
const HScroll = styled.div`
  height: 16px; flex: none; background: #f0f0f0; padding: 7px 0 0 404px;
  &::after { content: ""; display: block; width: 17px; height: 2px; background: #858585; }
`;
const SheetBar = styled.div`
  flex: 1; display: flex; background: linear-gradient(#5b5b5b, #6a6a6a 30%, #7c7c7c); padding-top: 1px; border-top: 1px solid #555;
`;
const NavButtons = styled.div` display: flex; gap: 2.5px; padding-top: 1px; svg { display: block; width: 13.5px; height: 14px; } `;
const SheetTabs = styled.svg` width: 125px; height: 17px; display: block; margin-left: 5px; text { font-family: "Open Sans", "Noto Sans", sans-serif; font-size: 12px; } `;
const Status = styled.footer`
  height: 19px; flex: none; display: flex; align-items: center; color: #fff; padding: 3px 2px 0 4px;
  background: linear-gradient(180deg, #45495a 0, #3e424d 45%, #2d2d2d 50%, #333 90%, #333);
`;
const Sep = styled.i` width: 1px; height: 14px; background: #777; margin: 0 ${(p) => p.$r ?? 5.2}px 0 ${(p) => p.$l ?? 0}px; `;

const Side = styled.div` width: 48px; display: flex; flex-direction: column; flex: none; `;
const SideBar = styled.section`
  height: ${(p) => p.$h}px; flex: none; background: ${sideBg}; border-left: 1px solid #e0e2e6; border-radius: 3px;
  display: flex; flex-direction: column; align-items: center; padding: 4px 2px 0 0;
`;
const SideGrip = styled.div`
  width: 31px; height: 3px; flex: none; margin-bottom: ${(p) => p.$mb}px;
  background: repeating-linear-gradient(90deg, #3b3e44 0 2px, #e4e6ea 2px 3px, transparent 3px 4px);
`;
const SideText = styled.div`
  width: 16px; height: ${(p) => p.$h}px; flex: none;
  & > span { transform: rotate(90deg); transform-origin: 8px 8px; }
`;
const SideToggle = styled.div`
  width: 43px; height: 63px; flex: none; margin: 3px 0 6px 0; padding: 6px 0 0 13px; background: ${orange};
  border: 1px solid #b5b0a6; border-right-color: #fff; border-bottom-color: #fff;
`;
const SideGap = styled.div` height: ${(p) => p.$h}px; flex: none; `;
const SideLine = styled.hr` width: 28px; height: 2px; flex: none; border: 0; margin: 0; background: #5a606a; border-bottom: 1px solid #eee; `;
const SideMore = styled.div`
  height: 20px; flex: none; display: flex; align-items: center; justify-content: flex-end; padding-right: 3px;
  background: linear-gradient(90deg, #4d525c 0, #868c97 65%, #a0a6b1 100%);
  svg { width: 14px; height: 12px; }
`;
function SideChevron() {
  return (
    <SideMore>
      <svg viewBox="0 0 14 12" shapeRendering="crispEdges">
        <path d="M2 1v10" stroke="#444" strokeWidth="2" /><path d="M3.500 1v10" stroke="#fff" />
        <path d="M7 1v10l5-5z" fill="#333" /><path d="M8 11l5-5-3-3" stroke="#fff" fill="none" />
      </svg>
    </SideMore>
  );
}

const MENU = [["File", 18], ["Edit", 20], ["Select", 30], ["Snaps", 31], ["Tools", 27], ["Actions", 38], ["Commands", 57], ["Auto Draw", 55], ["Roof Planes", 61], ["Wizards", 41], ["Hydraulics", 53], ["Finish", 31], ["Alerts", 29], ["Listing", 34], ["Parts Database", 76], ["AutoPREP", 51], ["Settings", 42], ["View", 25], ["Window", 44], ["Help", 24]];
const SYMBOLS = [["Default Sym...", 73, "0", "2"], ["Long-Eared ...", 73, "0", "6"], ["NEW", 26, "1", "3"]];
const PANE_TABS = [["La...", 20, 27], ["D...", 17, 27], ["Sy...", 19, 24, 1], ["Al...", 19, 27], ["Se...", 20, 27], ["D...", 17, 27], ["Te...", 20, 27], ["Pa...", 21, 27], ["N...", 17, 27], ["Tr...", 18, 27], ["Fa...", 20, 27]];

function ringTicks() {
  const out = [];
  for (let i = 0; i < 20; i++) {
    const a = (i * Math.PI) / 10;
    out.push(`M${267 + 201 * Math.cos(a)} ${352 + 201 * Math.sin(a)}L${267 + 222 * Math.cos(a)} ${352 + 222 * Math.sin(a)}`);
  }
  return out.join("");
}
function ringPoly(r) {
  return Array.from({ length: 20 }, (_, i) => `${267 + r * Math.cos((i * Math.PI) / 10)},${352 + r * Math.sin((i * Math.PI) / 10)}`).join(" ");
}

export default function App() {
  return (
    <Shell>
      <Global />
      <TitleBar>
        <AppLogo viewBox="0 0 15 17">
          <rect width="15" height="17" rx="1" fill="#3c4654" /><path d="M11 3q-3 0-3 4v7M4 11h7" stroke="#c8d4e4" strokeWidth="2" fill="none" /><path d="M2 13L8 3v9M3 10h9" stroke="#2f74e0" strokeWidth="1.800" fill="none" />
        </AppLogo>
        <Fit w={286}>AutoSPRINK® 2023 Platinum - Drawing1 - [Drawing1]</Fit>
        <Spacer />
        <WinButtons>
          <svg viewBox="0 0 11 13"><path d="M.5 7h10" stroke="#000" /></svg>
          <svg viewBox="0 0 11 13"><path d="M1 4h7v8H1zM3 4V2h5l2 2v6H8" stroke="#000" fill="none" strokeWidth="1.100" /></svg>
          <svg viewBox="0 0 11 13"><path d="M.5 2l10 10M10.500 2l-10 10" stroke="#000" fill="none" strokeWidth="1.100" /></svg>
        </WinButtons>
      </TitleBar>
      <MenuBar>
        <MenuIcon viewBox="0 0 15 15" shapeRendering="crispEdges">
          <rect width="15" height="15" fill="#fff" /><path d="M0 0h11v4H0z" fill="#e8e800" /><path d="M1 6h9v8H1z" fill="#00c800" /><path d="M3 7l3 4 4-4" fill="#fff" stroke="#333" /><path d="M12 5v7" stroke="#f0f" strokeWidth="2" /><path d="M.5.5h10l4 4v10H.5z" fill="none" stroke="#222" />
        </MenuIcon>
        {MENU.map(([t, w]) => <Fit key={t} w={w}>{t}</Fit>)}
        <Spacer />
        <MdiButtons>
          <svg viewBox="0 0 10 10"><path d="M1 8.500h7" stroke="#a9b0bc" strokeWidth="2" /></svg>
          <svg viewBox="0 0 10 10"><path d="M1 4h6v4H1zM3 3V1h6v5H8" stroke="#a9b0bc" strokeWidth="1.400" fill="none" /></svg>
          <svg viewBox="0 0 10 10"><path d="M2 1l6 8M8 1L2 9" stroke="#b4bac6" strokeWidth="2" fill="none" /></svg>
        </MdiButtons>
      </MenuBar>

      <ToolRow $w={1853}>
        <Tools w={687} gap={11} items={["file", "open", "save", "gear", "wrench", "lock", "loadGear", "saveGear", ["Load Toolbar State", 96], ["Save Toolbar State", 94, 6], ["Show Start Page", 84]]} />
        <Tools w={1166} gap={11} items={["lasso", "wand1", "wand2", "wand3", "wand4", "drip", "swirl", ["Remote Area Table", 95, "off"], "area", "plusMinus", ["Analysis Reports...", 93], "chair", ["Keep Hydraulically Most Demanding Area", 211], ["Riser Tag", 46, 5], "three", ["Renumber...", 61.5, 5], ["Cleanup", 42.5, 5], "cleanup"]} />
      </ToolRow>
      <ToolRow $w={1890}>
        <Tools w={1890} items={[["Pipe Outlet", 58, 6], "pipe", "wye", "nut", "capD", "disc", "cross", "elbow", "plate", "ubend", ["Mechanical Cross", 89, 5.6], ["Mechanical Tee", 77.5, 6], "reducer", ["Saddle", 35], ["Seismic Flex", 60], "tee", "coupling", "valve", "spool", "pump", "*head", "headUp", "sidewall", "sphere", ["Hydraulic Wormhole", 104.5, 4], "hydrant", ["Strainer", 40], "strainerA", "axes", "hanger", "vault", ["Hanger Assembly...", 96.5, 5.6], "hangerDim", "axesDim", ["Parts Profile...", 70]]} />
      </ToolRow>
      <ToolRow $w={1909}>
        <Tools w={571} items={[["Create Detail...", 74.5], "detail", "crop", ["Hide Layers", 57.5], ["Isolate Layers", 67.5], ["Unisolate Layers", 82.5, "off"], ["Interference Checking...", 122]]} />
        <Tools w={736} items={[["Hydraulic Calculations...", 122.5, 5.6], "graph", "book", "table", "region", "newPage", "cubeSel", "panel", "scroll", "printPic", "pageBrush", "printer", "server", "windowI"]} />
        <Tools w={386} items={["elevPipes", ["Elevate to Pipes", 80], ["Elevate Beams...", 79.5, 5], "levels", "tagWide", "tagDown"]} />
        <Tools w={216} items={["beam", "starI", ["Sprinkler Legend", 87]]} />
      </ToolRow>

      <Work>
        <LeftStack>
          <Panes>
            <SymbolPane>
              <PaneTitle>
                <Fit w={41}>Symbols</Fit>
                <Spacer />
                <svg viewBox="0 0 10 10"><path d="M3 1h4v5H3zM1 6.500h8M5 6v4" stroke="#444" fill="none" strokeWidth="1.200" /></svg>
                <svg viewBox="0 0 10 10"><path d="M1 1l8 8M9 1L1 9" stroke="#444" fill="none" strokeWidth="1.400" /></svg>
              </PaneTitle>
              <PaneBody>
                <HeadRow>
                  <HeadCell $w={100}><Fit w={29}>Name</Fit></HeadCell>
                  <HeadCell $w={50}><Fit w={32}>Count</Fit></HeadCell>
                  <HeadCell $w={50}><Fit w={39}>Eleme...</Fit></HeadCell>
                </HeadRow>
                {SYMBOLS.map(([n, w, c, e]) => (
                  <SymRow key={n}>
                    <svg viewBox="0 0 16 15" shapeRendering="crispEdges">
                      <rect width="16" height="15" rx="2" fill="#00f000" />
                      <path d="M2 5V2h3M7 2h2v2M12 2h2v2" fill="none" stroke="#fff" strokeWidth="1.500" />
                      <path d="M2 9h3v4H2zM6 9h3v4H6zM10 8h4v5h-4z" fill="#fff" stroke="#007800" strokeWidth=".8" />
                      <path d="M0 14.500h16M15.500 1v13" stroke="#009a00" fill="none" />
                    </svg>
                    <Fit w={w}>{n}</Fit><Fit w={6}>{c}</Fit><Fit w={6}>{e}</Fit>
                  </SymRow>
                ))}
                <Preview viewBox="114 847 70 96" shapeRendering="crispEdges">
                  <rect x="144" y="854" width="31" height="84" rx="1" fill="none" stroke="#000" strokeWidth="6" strokeLinejoin="round" />
                  <path d="M118 884.500v24l26-6 12-3M118 884.500l28 6 10 6" fill="none" stroke="#000" strokeWidth="5" strokeLinejoin="round" />
                  <path d="M143 887h8l6 4h18v11h-18l-6 3h-8z" />
                </Preview>
              </PaneBody>
              <PaneTabs>{PANE_TABS.map(([t, w, s, on], i) => <PaneTab key={i} $w={s} $on={on}><Fit w={w}>{t}</Fit></PaneTab>)}</PaneTabs>
            </SymbolPane>
            <Mdi>
              <DocTabs>
                <Fit w={52}>Start Page</Fit>
                <DocTab><Fit w={49}>Drawing1</Fit><svg viewBox="0 0 8 8"><path d="M0 0l8 8M8 0L0 8" stroke="#555" strokeWidth="1.300" /></svg></DocTab>
                <Spacer />
                <TabArrows viewBox="0 0 24 10"><path d="M4.500 1v8L.5 5zM18.500 1v8l4-4z" fill="none" stroke="#6e6e6e" /></TabArrows>
              </DocTabs>
              <DocFrame>
                <CanvasRow>
                  <Canvas>
                    <Head viewBox="0 0 600 630" shapeRendering="crispEdges">
                      <path d="M210 123h192v458H228v-35h-18zM246 158v387h120V177h-40v-19z" fill="#00ff66" fillRule="evenodd" />
                      <path d="M246 340h120v25H246z" fill="#00ff66" />
                      <polygon points={ringPoly(212)} fill="none" stroke="#000" strokeWidth="28" />
                      <path d="M366 177h34v350h-34z" fill="#00ff66" />
                      <path d={ringTicks()} stroke="#fff" strokeWidth="3" strokeDasharray="4 14" />
                      <path d="M93 294l160 32v50L93 410z" fill="#00fb60" />
                      <path d="M93 294l160 32" stroke="#00c84c" strokeWidth="4" />
                      <path d="M249 273h36v158h-36z" fill="#6666ff" />
                      <path d="M249 298h36M249 410h36" stroke="#fff" strokeWidth="3" />
                      <circle cx="267" cy="353" r="56" fill="none" stroke="#8dffbb" strokeWidth="3" />
                      <circle cx="267" cy="353" r="30" fill="#00f060" />
                      <path d="M267 353v-30a30 30 0 0 0-30 30zM267 353v30a30 30 0 0 0 30-30z" />
                      <path d="M207 352h120M252 368l32-34" stroke="#101030" strokeWidth="3" />
                      <path d="M236 172h6v150h-6z" fill="#4fa068" />
                      <path d="M238 173h-30L267 53l59 120h-29v150" fill="none" stroke="#4c8a5c" strokeWidth="3" />
                      <path d="M297 322h150v-30l120 60-120 60v-30H262" fill="none" stroke="#9a4a4a" strokeWidth="3" />
                      <path d="M383 138h4M383 212h4M383 286h4M383 352h4M383 418h4M383 491h4M383 565h4" stroke="#d8ffe8" strokeWidth="3" />
                    </Head>
                  </Canvas>
                  <VScroll />
                </CanvasRow>
                <HScroll />
                <SheetBar>
                  <NavButtons>
                    {["M4 4v7M10 4v7L6 7.500z", "M9 4v7L5 7.500z", "M5 4v7l4-3.500z", "M4 4v7l4-3.500zM10 4v7"].map((d) => (
                      <svg key={d} viewBox="0 0 13.500 14"><rect width="13.500" height="14" fill="#ececec" /><path d={d} fill="#444" stroke="#444" strokeWidth=".7" /></svg>
                    ))}
                  </NavButtons>
                  <SheetTabs viewBox="0 0 125 17">
                    <defs><linearGradient id="sheet" x2="0" y2="1"><stop offset="0" stopColor="#dfe3e9" /><stop offset=".55" stopColor="#b8c0cc" /><stop offset="1" stopColor="#e6e9ee" /></linearGradient></defs>
                    <path d="M48 16L60 1h55L101 16z" fill="url(#sheet)" stroke="#999" strokeWidth=".6" />
                    <path d="M0 0h60L46 16H0z" fill="#f7f8fa" /><path d="M60 0L46 16" stroke="#555" />
                    <path d="M2 14h44" stroke="#cfd5dd" strokeWidth="3" />
                    <text x="7" y="12.500" fontWeight="700" textLength="38.500" lengthAdjust="spacingAndGlyphs">*Model</text>
                    <text x="59.500" y="12.500" textLength="41" lengthAdjust="spacingAndGlyphs">*Sheet 1</text>
                  </SheetTabs>
                </SheetBar>
              </DocFrame>
            </Mdi>
          </Panes>
          <Status>
            <Fit w={201}>Select a location for the sprinkler head.</Fit>
            <Spacer />
            <Sep $r={3} /><Fit w={44}>0'-0, 0'-0</Fit><Sep $l={2} /><Sep /><Sep /><Sep /><Sep $r={3} /><Fit w={26}># Off</Fit><Sep $l={3} $r={3} /><Fit w={24}>Foot</Fit>
          </Status>
          <ToolRow $w={1856}>
            <Tools w={627} items={[["Reset Panes", 60.5, 5.6], "panes", ["Layers", 30, "on"], ["Parts Picker", 57.5, "on"], ["Alerts", 28.5, "on"], ["Select", 29, "on"], ["Symbols", 41, "on"], "left", ["-Y", 9, 4.5], "up", ["+X", 13, 5], "right", ["+Y", 13, 5], "down", ["-X", 9, 4]]} />
            <Tools w={143} gap={7} items={["black", <NumberInput><span>0</span></NumberInput>]} />
            <Tools w={1086} gap={9} items={["undoDim", "dots", "checks", "sparkSel", "windowT", ["Lock On Target", 77, "on"], "zoomUp", "zoomDn", "pUp", "pLeft", "turnL", "pDown", "pRight", "turnR", "rotA", "rotB", "houseA", "houseB", "houseC", "houseD", "expand", "plan3d", "*plan"]} />
          </ToolRow>
        </LeftStack>
        <Side>
          <SideBar $h={213}>
            <SideGrip $mb={10} />
            <SideText $h={65}><Fit w={65}>Import DWG</Fit></SideText>
            <SideGap $h={7} /><Icon name="dwg" /><SideGap $h={10} /><Icon name="overlay" /><SideGap $h={11} /><Icon name="boxes" />
          </SideBar>
          <SideChevron />
          <SideBar $h={281}>
            <SideGrip $mb={8} />
            <Icon name="sprigA" /><SideGap $h={10} /><Icon name="sprigB" /><SideGap $h={8} /><SideLine /><SideGap $h={8} />
            <Icon name="bend" /><SideGap $h={9} /><Icon name="route" /><SideGap $h={9} /><SideLine /><SideGap $h={9} />
            <Icon name="joinA" /><SideGap $h={14} /><Icon name="joinB" />
          </SideBar>
          <SideChevron />
          <SideBar $h={241}>
            <SideGrip $mb={9} />
            <SideText $h={31}><Fit w={30}>GLSL</Fit></SideText>
            <SideToggle><SideText $h={54}><Fit w={53}>OpenGL®</Fit></SideText></SideToggle>
            <Icon name="monL" /><SideGap $h={9} /><Icon name="monR" /><SideGap $h={9} /><Icon name="props" />
          </SideBar>
          <SideChevron />
        </Side>
      </Work>
    </Shell>
  );
}
